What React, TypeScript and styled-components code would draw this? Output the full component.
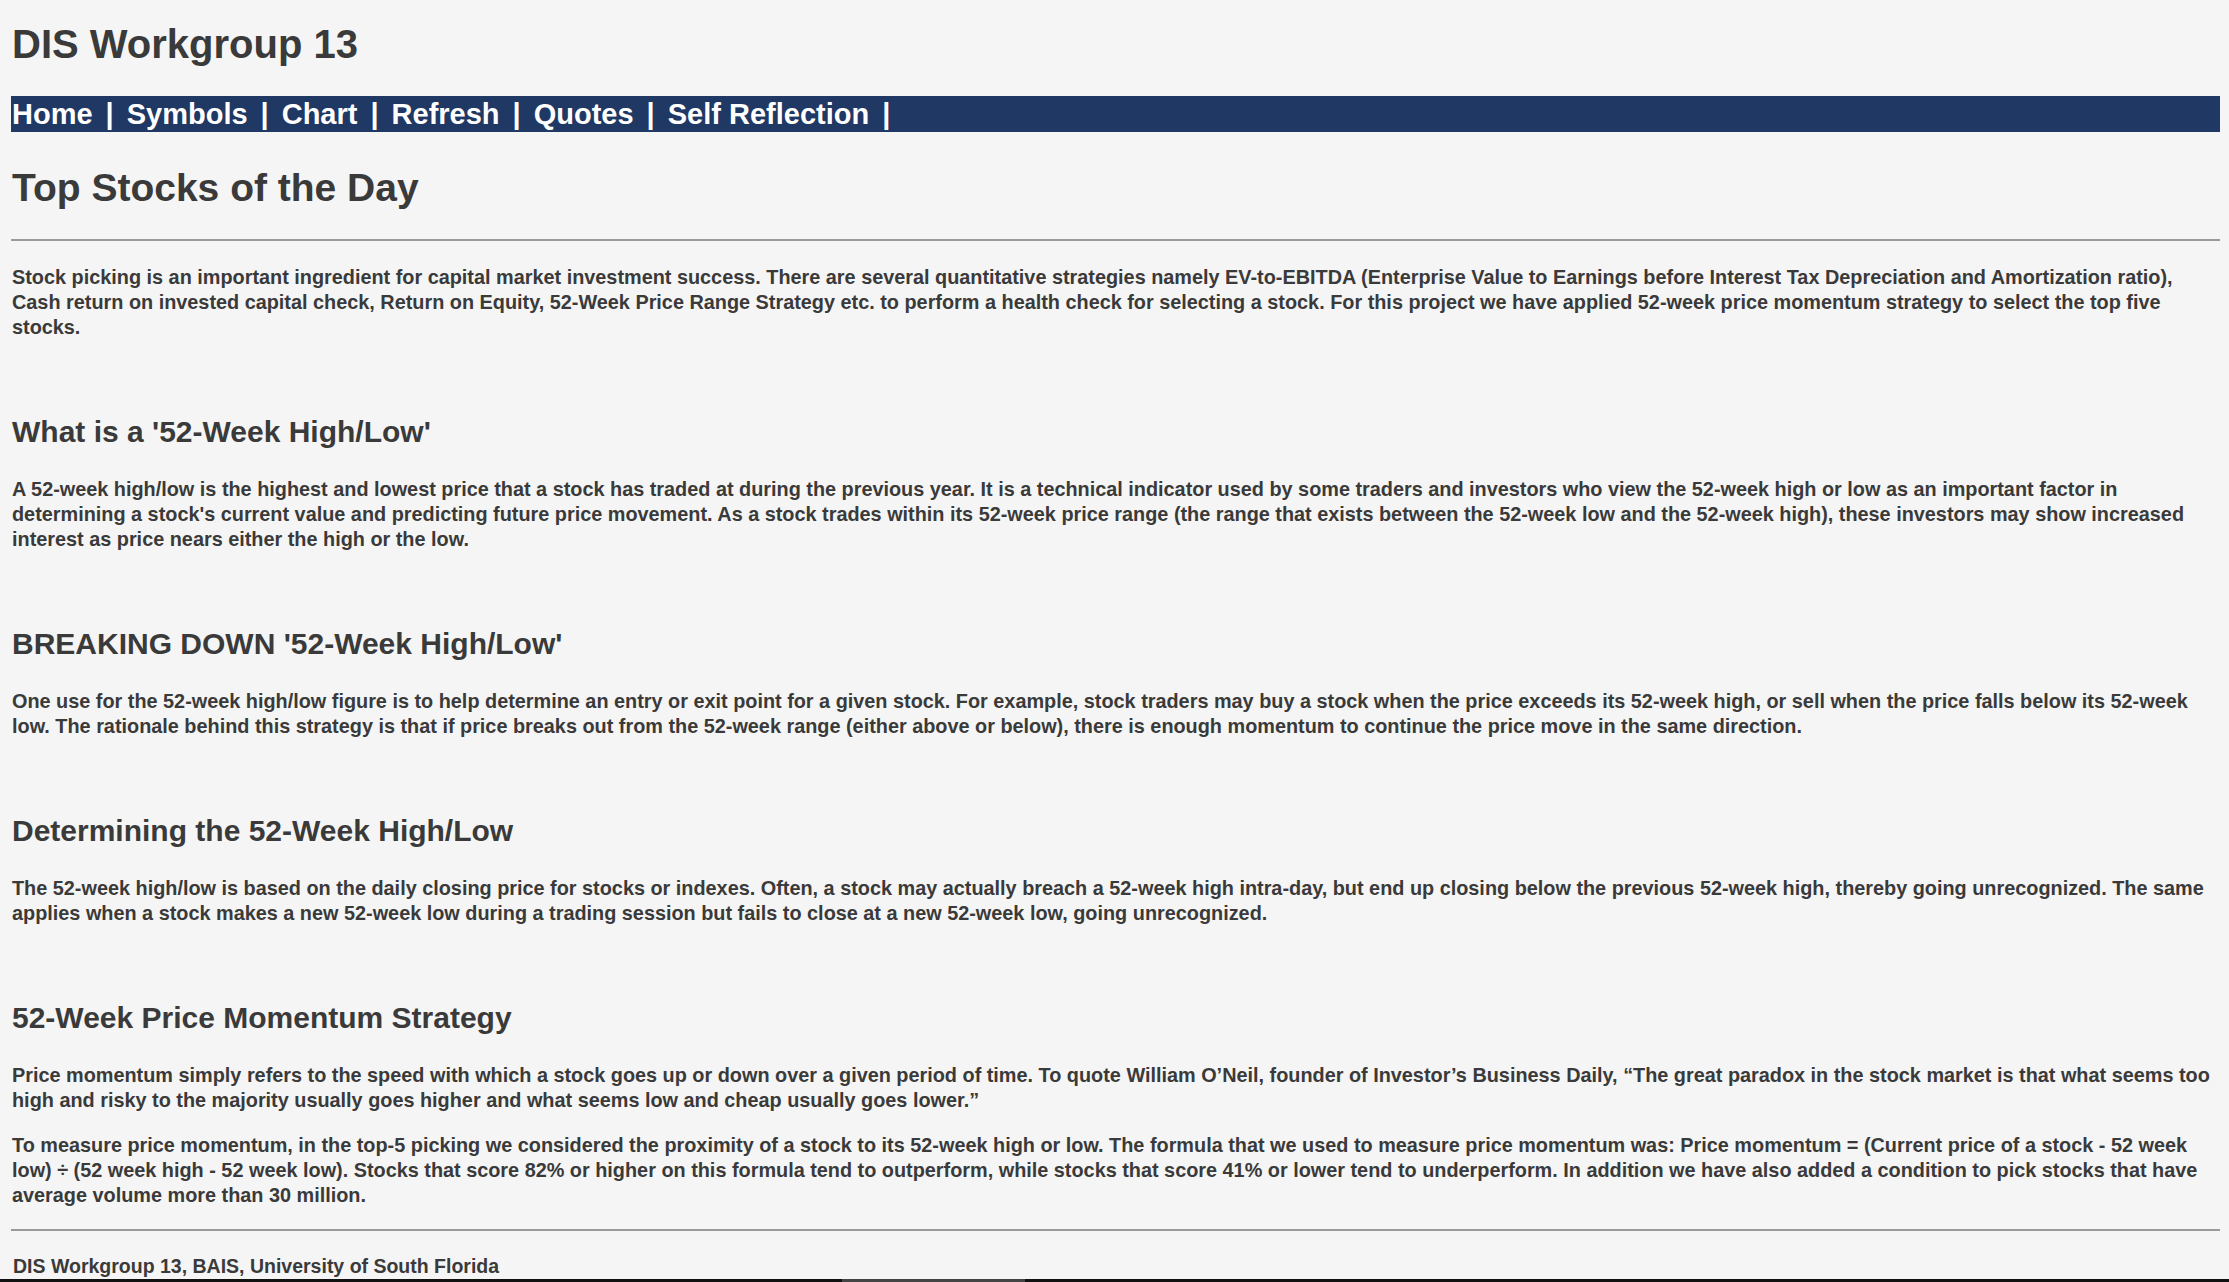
import React from "react";
import styled, { createGlobalStyle } from "styled-components";

const GlobalStyle = createGlobalStyle`
  html, body {
    margin: 0;
    padding: 0;
    background: #f5f5f5;
  }
  body {
    font-family: "Liberation Sans", Arial, sans-serif;
    color: #3a3a3a;
  }
`;

const Page = styled.div`
  padding: 21px 9px 0 11px;
`;

const Title = styled.h1`
  margin: 0 0 29px 1px;
  font-size: 40px;
  font-weight: bold;
  line-height: 46px;
`;

const NavBar = styled.nav`
  display: flex;
  align-items: center;
  height: 36px;
  padding-left: 1px;
  background: #1f3864;
`;

const NavLink = styled.a`
  color: #ffffff;
  font-size: 29px;
  font-weight: bold;
  line-height: 36px;
  text-decoration: none;
  white-space: nowrap;
`;

const NavSep = styled.span`
  margin: 0 13px;
  color: #ffffff;
  font-size: 29px;
  font-weight: bold;
  line-height: 36px;
`;

const PageTitle = styled.h1`
  margin: 33px 0 0 1px;
  font-size: 39px;
  font-weight: bold;
  line-height: 45px;
`;

const Rule = styled.hr<{ $top: number; $bottom: number }>`
  margin: ${(p) => `${p.$top}px 0 ${p.$bottom}px`};
  border: none;
  border-top: 2px solid #9a9a9a;
`;

const Heading = styled.h2`
  margin: 74px 0 28px 1px;
  font-size: 30px;
  font-weight: bold;
  line-height: 35px;
`;

const Para = styled.p`
  margin: 0 0 20px 1px;
  font-size: 19.85px;
  font-weight: bold;
  line-height: 25px;
`;

const Footer = styled.footer`
  margin-left: 2px;
  font-size: 19.5px;
  font-weight: bold;
  line-height: 25px;
`;

const BottomStrip = styled.div`
  position: fixed;
  left: 0;
  right: 0;
  bottom: 0;
  height: 3px;
  background: #111111;
`;

const StripThumb = styled.div`
  position: absolute;
  left: 842px;
  width: 183px;
  top: 0;
  bottom: 0;
  background: #444444;
`;

const links = ["Home", "Symbols", "Chart", "Refresh", "Quotes", "Self Reflection"];

const sections = [
  {
    title: "What is a '52-Week High/Low'",
    paras: [
      "A 52-week high/low is the highest and lowest price that a stock has traded at during the previous year. It is a technical indicator used by some traders and investors who view the 52-week high or low as an important factor in determining a stock's current value and predicting future price movement. As a stock trades within its 52-week price range (the range that exists between the 52-week low and the 52-week high), these investors may show increased interest as price nears either the high or the low.",
    ],
  },
  {
    title: "BREAKING DOWN '52-Week High/Low'",
    paras: [
      "One use for the 52-week high/low figure is to help determine an entry or exit point for a given stock. For example, stock traders may buy a stock when the price exceeds its 52-week high, or sell when the price falls below its 52-week low. The rationale behind this strategy is that if price breaks out from the 52-week range (either above or below), there is enough momentum to continue the price move in the same direction.",
    ],
  },
  {
    title: "Determining the 52-Week High/Low",
    paras: [
      "The 52-week high/low is based on the daily closing price for stocks or indexes. Often, a stock may actually breach a 52-week high intra-day, but end up closing below the previous 52-week high, thereby going unrecognized. The same applies when a stock makes a new 52-week low during a trading session but fails to close at a new 52-week low, going unrecognized.",
    ],
  },
  {
    title: "52-Week Price Momentum Strategy",
    paras: [
      "Price momentum simply refers to the speed with which a stock goes up or down over a given period of time. To quote William O\u2019Neil, founder of Investor\u2019s Business Daily, \u201cThe great paradox in the stock market is that what seems too high and risky to the majority usually goes higher and what seems low and cheap usually goes lower.\u201d",
      "To measure price momentum, in the top-5 picking we considered the proximity of a stock to its 52-week high or low. The formula that we used to measure price momentum was: Price momentum = (Current price of a stock - 52 week low) \u00f7 (52 week high - 52 week low). Stocks that score 82% or higher on this formula tend to outperform, while stocks that score 41% or lower tend to underperform. In addition we have also added a condition to pick stocks that have average volume more than 30 million.",
    ],
  },
];

const App: React.FC = () => {
  return (
    <>
      <GlobalStyle />
      <Page>
        <Title>DIS Workgroup 13</Title>
        <NavBar>
          {links.map((l) => (
            <React.Fragment key={l}>
              <NavLink href="#">{l}</NavLink>
              <NavSep>|</NavSep>
            </React.Fragment>
          ))}
        </NavBar>
        <PageTitle>Top Stocks of the Day</PageTitle>
        <Rule $top={29} $bottom={24} />
        <Para>
          Stock picking is an important ingredient for capital market investment success. There are
          several quantitative strategies namely EV-to-EBITDA (Enterprise Value to Earnings before
          Interest Tax Depreciation and Amortization ratio), Cash return on invested capital check,
          Return on Equity, 52-Week Price Range Strategy etc. to perform a health check for selecting
          a stock. For this project we have applied 52-week price momentum strategy to select the top
          five stocks.
        </Para>
        {sections.map((s) => (
          <section key={s.title}>
            <Heading>{s.title}</Heading>
            {s.paras.map((p, i) => (
              <Para key={i}>{p}</Para>
            ))}
          </section>
        ))}
        <Rule $top={21} $bottom={23} />
        <Footer>DIS Workgroup 13, BAIS, University of South Florida</Footer>
      </Page>
      <BottomStrip>
        <StripThumb />
      </BottomStrip>
    </>
  );
};

export default App;
